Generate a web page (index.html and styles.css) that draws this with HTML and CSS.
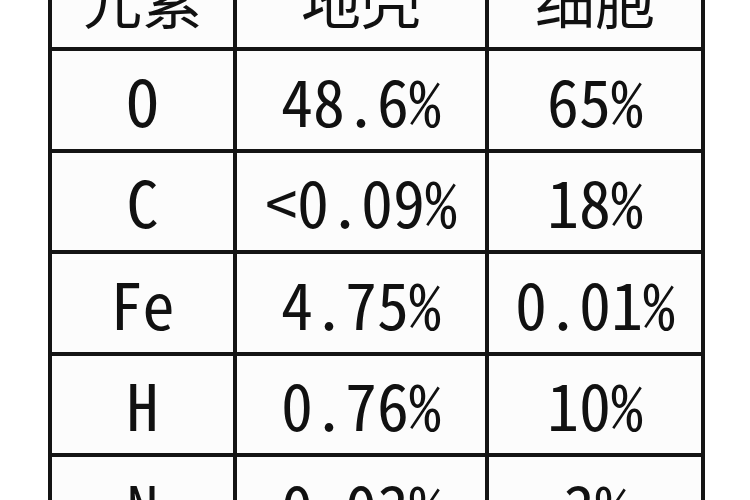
FILE: index.html
```html
<!DOCTYPE html>
<html lang="zh">
<head>
<meta charset="utf-8">
<title>元素含量</title>
<link rel="stylesheet" href="styles.css">
</head>
<body>
<div class="table">
  <div class="cell head"><span>元素</span></div>
  <div class="cell head"><span>地壳</span></div>
  <div class="cell head"><span>细胞</span></div>

  <div class="cell"><span>O</span></div>
  <div class="cell"><span>48.6%</span></div>
  <div class="cell"><span>65%</span></div>

  <div class="cell"><span>C</span></div>
  <div class="cell"><span>&lt;0.09%</span></div>
  <div class="cell"><span>18%</span></div>

  <div class="cell"><span>Fe</span></div>
  <div class="cell"><span>4.75%</span></div>
  <div class="cell"><span>0.01%</span></div>

  <div class="cell"><span>H</span></div>
  <div class="cell"><span>0.76%</span></div>
  <div class="cell"><span>10%</span></div>

  <div class="cell"><span>N</span></div>
  <div class="cell"><span>0.03%</span></div>
  <div class="cell"><span>3%</span></div>
</div>
</body>
</html>
```

FILE: styles.css
```css
html, body {
  margin: 0;
  padding: 0;
  background: #ffffff;
  overflow: hidden;
}

.table {
  display: grid;
  grid-template-columns: 181px 248px 212px;
  grid-auto-rows: 97.5px;
  gap: 4px;
  padding: 4px;
  width: max-content;
  background: #141414;
  margin: -54.5px 0 0 48px;
}

.cell {
  background: #fcfcfc;
  display: flex;
  align-items: center;
  justify-content: center;
  font-family: "Noto Sans Mono CJK SC", "Liberation Mono", monospace;
  font-size: 64px;
  color: #111111;
}

.cell span {
  display: inline-block;
  line-height: 1;
  transform: translateY(-1px);
}

.head span {
  font-family: "Noto Sans CJK SC", sans-serif;
  font-size: 60px;
  transform: none;
}
```
